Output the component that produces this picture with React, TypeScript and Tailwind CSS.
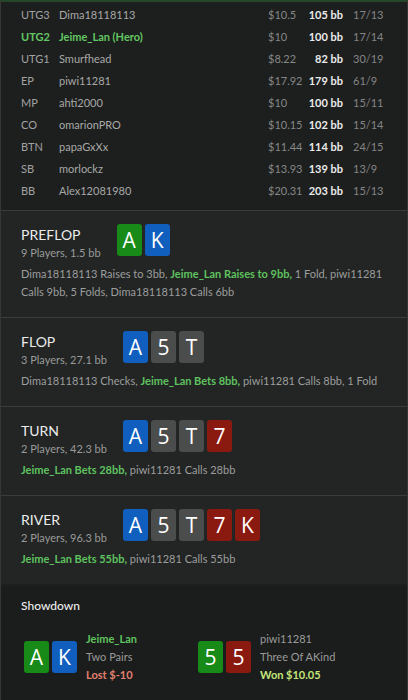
import React from "react";

type Card = { r: string; c: "g" | "b" | "x" | "r" };

const cardColor: Record<Card["c"], string> = {
  g: "bg-[#178a17]",
  b: "bg-[#105fbe]",
  x: "bg-[#4b4c4c]",
  r: "bg-[#8a1a10]",
};

function PCard({ card }: { card: Card }) {
  return (
    <div
      className={`flex h-8 w-[25px] items-center justify-center rounded-[3px] text-[21px] leading-none text-white ${cardColor[card.c]}`}
      style={{ fontFamily: "'Open Sans', sans-serif" }}
    >
      {card.r}
    </div>
  );
}

function Cards({ cards }: { cards: Card[] }) {
  return (
    <div className="flex gap-[3px]">
      {cards.map((c, i) => (
        <PCard key={i} card={c} />
      ))}
    </div>
  );
}

const rows = [
  ["UTG3", "Dima18118113", "$10.5", "105 bb", "17/13", false],
  ["UTG2", "Jeime_Lan (Hero)", "$10", "100 bb", "17/14", true],
  ["UTG1", "Smurfhead", "$8.22", "82 bb", "30/19", false],
  ["EP", "piwi11281", "$17.92", "179 bb", "61/9", false],
  ["MP", "ahti2000", "$10", "100 bb", "15/11", false],
  ["CO", "omarionPRO", "$10.15", "102 bb", "15/14", false],
  ["BTN", "papaGxXx", "$11.44", "114 bb", "24/15", false],
  ["SB", "morlockz", "$13.93", "139 bb", "13/9", false],
  ["BB", "Alex12081980", "$20.31", "203 bb", "15/13", false],
] as const;

function Street({
  title,
  sub,
  cards,
  children,
}: {
  title: string;
  sub: string;
  cards: Card[];
  children: React.ReactNode;
}) {
  return (
    <div className="border-t border-[#393c3b] bg-[#222524] px-5 pb-4 pt-[13px]">
      <div className="flex items-start gap-4">
        <div className="pt-[1px]">
          <div className="text-[14px] leading-[19px] text-[#ececec]">{title}</div>
          <div className="whitespace-nowrap text-[11px] leading-[18px] text-[#9a9a9a]">{sub}</div>
        </div>
        <Cards cards={cards} />
      </div>
      <div className="mt-[3px] text-[11px] leading-[18px] text-[#9d9d9d]">{children}</div>
    </div>
  );
}

const G = ({ children }: { children: React.ReactNode }) => (
  <span className="font-bold text-[#5fc25f]">{children}</span>
);

export default function App() {
  return (
    <div
      className="min-h-[700px] w-[408px] border-x border-[#343736] bg-[#1d1f1e]"
      style={{ fontFamily: "Lato, 'Noto Sans', sans-serif" }}
    >
      <div className="h-[2px] bg-[#24472a]" />
      <div className="px-5 pb-2 pt-[2px] text-[11px]">
        {rows.map(([pos, name, money, bb, ratio, hero]) => (
          <div key={pos} className="flex h-[22px] items-center whitespace-nowrap">
            <div
              className={`w-[38px] ${hero ? "font-bold text-[#63c763]" : "text-[#a2a2a2]"}`}
            >
              {pos}
            </div>
            <div
              className={`w-[209px] ${hero ? "font-bold text-[#63c763]" : "text-[#a8a8a8]"}`}
            >
              {name}
            </div>
            <div className="w-[40px] text-[#878787]">{money}</div>
            <div className="w-[35px] text-right font-bold text-[#ebebeb]">{bb}</div>
            <div className="ml-[10px] text-[#858585]">{ratio}</div>
          </div>
        ))}
      </div>

      <Street
        title="PREFLOP"
        sub="9 Players, 1.5 bb"
        cards={[
          { r: "A", c: "g" },
          { r: "K", c: "b" },
        ]}
      >
        Dima18118113 Raises to 3bb, <G>Jeime_Lan Raises to 9bb,</G> 1 Fold, piwi11281
        <br />
        Calls 9bb, 5 Folds, Dima18118113 Calls 6bb
      </Street>

      <Street
        title="FLOP"
        sub="3 Players, 27.1 bb"
        cards={[
          { r: "A", c: "b" },
          { r: "5", c: "x" },
          { r: "T", c: "x" },
        ]}
      >
        Dima18118113 Checks, <G>Jeime_Lan Bets 8bb,</G> piwi11281 Calls 8bb, 1 Fold
      </Street>

      <Street
        title="TURN"
        sub="2 Players, 42.3 bb"
        cards={[
          { r: "A", c: "b" },
          { r: "5", c: "x" },
          { r: "T", c: "x" },
          { r: "7", c: "r" },
        ]}
      >
        <G>Jeime_Lan Bets 28bb,</G> piwi11281 Calls 28bb
      </Street>

      <div className="pb-[2px]">
        <Street
          title="RIVER"
          sub="2 Players, 96.3 bb"
          cards={[
            { r: "A", c: "b" },
            { r: "5", c: "x" },
            { r: "T", c: "x" },
            { r: "7", c: "r" },
            { r: "K", c: "r" },
          ]}
        >
          <G>Jeime_Lan Bets 55bb,</G> piwi11281 Calls 55bb
        </Street>
      </div>

      <div className="bg-[#1b1d1c] pb-5 pt-[11px]">
        <div className="px-5 text-[12px] font-medium leading-[18px] text-[#ececec]">Showdown</div>
        <div className="mt-[15px] flex items-center px-[23px]">
          <div className="flex w-[174px] items-center gap-[9px]">
            <Cards
              cards={[
                { r: "A", c: "g" },
                { r: "K", c: "b" },
              ]}
            />
            <div className="text-[11px] leading-[18px]">
              <div className="font-bold text-[#5fc25f]">Jeime_Lan</div>
              <div className="text-[#9a9a9a]">Two Pairs</div>
              <div className="font-bold text-[#e2806e]">Lost $-10</div>
            </div>
          </div>
          <div className="flex items-center gap-[9px]">
            <Cards
              cards={[
                { r: "5", c: "g" },
                { r: "5", c: "r" },
              ]}
            />
            <div className="text-[11px] leading-[18px]">
              <div className="text-[#9a9a9a]">piwi11281</div>
              <div className="text-[#9a9a9a]">Three Of AKind</div>
              <div className="font-bold text-[#c4e57a]">Won $10.05</div>
            </div>
          </div>
        </div>
      </div>
    </div>
  );
}
